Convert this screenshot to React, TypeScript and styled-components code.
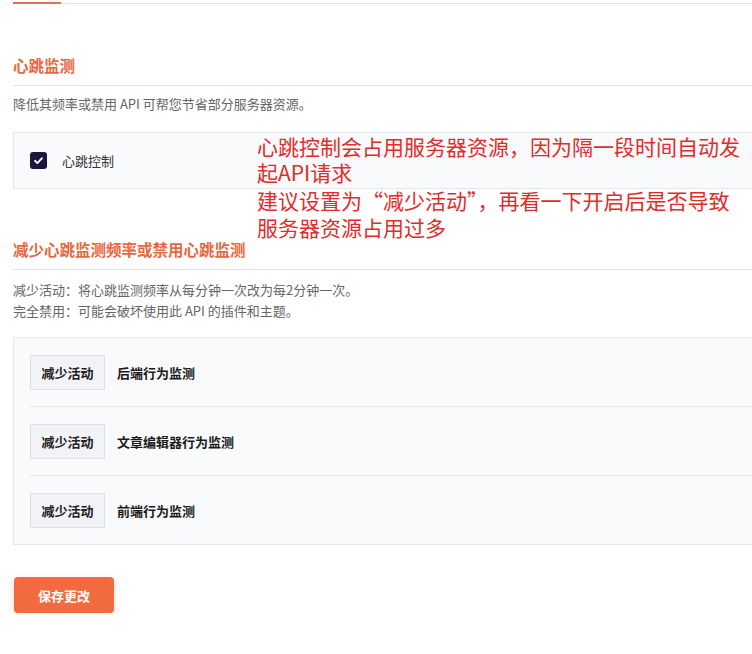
import React from 'react'
import styled, { createGlobalStyle } from 'styled-components'

const GlobalStyle = createGlobalStyle`
  html, body {
    margin: 0;
    padding: 0;
    background: #fff;
    overflow: hidden;
  }
  body {
    font-family: "Noto Sans CJK SC", "Noto Sans", sans-serif;
    color: #333;
  }
`

const Page = styled.div`
  position: relative;
  width: calc(100% + 20px);
  padding-left: 13px;
  box-sizing: border-box;
`

const TabBar = styled.div`
  display: flex;
  height: 3px;
  border-bottom: 1px solid #e4e4e4;
`

const ActiveTab = styled.div`
  width: 48px;
  border-bottom: 2px solid #e0724f;
  margin-bottom: -1px;
`

const SectionTitle = styled.h2<{ $top: number }>`
  margin: ${p => p.$top}px 0 0;
  padding-bottom: 9px;
  font-size: 15.5px;
  line-height: 22px;
  font-weight: 700;
  color: #e8673f;
  border-bottom: 1px solid #e3e3e3;
`

const Desc = styled.p<{ $top: number }>`
  margin: ${p => p.$top}px 0 0;
  font-size: 13px;
  line-height: 21px;
  color: #666;
`

const Panel = styled.div<{ $top: number }>`
  margin-top: ${p => p.$top}px;
  background: #f9fafb;
  border: 1px solid #e5e7eb;
`

const CheckRow = styled.label`
  display: flex;
  align-items: center;
  gap: 15px;
  height: 55px;
  padding-left: 16px;
  font-size: 13px;
  color: #333;
`

const CheckBox = styled.span`
  width: 17px;
  height: 17px;
  border-radius: 3px;
  background: #1d1540;
  display: flex;
  align-items: center;
  justify-content: center;
`

const Row = styled.div`
  display: flex;
  align-items: center;
  gap: 12px;
  height: 68px;
  margin-left: 16px;
  & + & {
    border-top: 1px solid #e2e4e7;
  }
`

const ModeButton = styled.div`
  width: 75px;
  height: 35px;
  box-sizing: border-box;
  display: flex;
  align-items: center;
  justify-content: center;
  background: #f1f3f6;
  border: 1px solid #dde0e4;
  font-size: 13px;
  font-weight: 700;
  color: #222;
`

const RowLabel = styled.span`
  font-size: 13px;
  font-weight: 700;
  color: #1a1a1a;
`

const SaveButton = styled.button`
  margin-top: 32px;
  margin-left: 1px;
  width: 100px;
  height: 36px;
  border: none;
  border-radius: 4px;
  background: #f26a40;
  color: #fff;
  font-family: inherit;
  font-size: 13px;
  font-weight: 700;
  box-shadow: 0 3px 8px rgba(242, 106, 64, 0.25);
`

const Annotation = styled.div`
  position: absolute;
  left: 257px;
  top: 133px;
  width: 500px;
  font-size: 21px;
  color: #e22b2b;
`

const NoteBlock = styled.p<{ $lh: number }>`
  margin: 0;
  line-height: ${p => p.$lh}px;
`

const rows = ['后端行为监测', '文章编辑器行为监测', '前端行为监测']

export default function App() {
  return (
    <Page>
      <GlobalStyle />
      <TabBar>
        <ActiveTab />
      </TabBar>

      <SectionTitle $top={50}>心跳监测</SectionTitle>
      <Desc $top={7}>降低其频率或禁用 API 可帮您节省部分服务器资源。</Desc>

      <Panel $top={18}>
        <CheckRow>
          <CheckBox>
            <svg width="11" height="11" viewBox="0 0 12 12">
              <path d="M2.2 6.3 L4.8 8.8 L9.8 3.4" fill="none" stroke="#fff" strokeWidth="2" strokeLinecap="round" strokeLinejoin="round" />
            </svg>
          </CheckBox>
          心跳控制
        </CheckRow>
      </Panel>

      <SectionTitle $top={49}>减少心跳监测频率或禁用心跳监测</SectionTitle>
      <Desc $top={9}>
        减少活动：将心跳监测频率从每分钟一次改为每2分钟一次。<br />
        完全禁用：可能会破坏使用此 API 的插件和主题。
      </Desc>

      <Panel $top={16}>
        {rows.map(r => (
          <Row key={r}>
            <ModeButton>减少活动</ModeButton>
            <RowLabel>{r}</RowLabel>
          </Row>
        ))}
      </Panel>

      <SaveButton>保存更改</SaveButton>

      <Annotation>
        <NoteBlock $lh={26}>
          心跳控制会占用服务器资源，因为隔一段时间自动发<br />起API请求
        </NoteBlock>
        <NoteBlock $lh={27} style={{ marginTop: 2 }}>
          建议设置为“减少活动”，再看一下开启后是否导致<br />服务器资源占用过多
        </NoteBlock>
      </Annotation>
    </Page>
  )
}
